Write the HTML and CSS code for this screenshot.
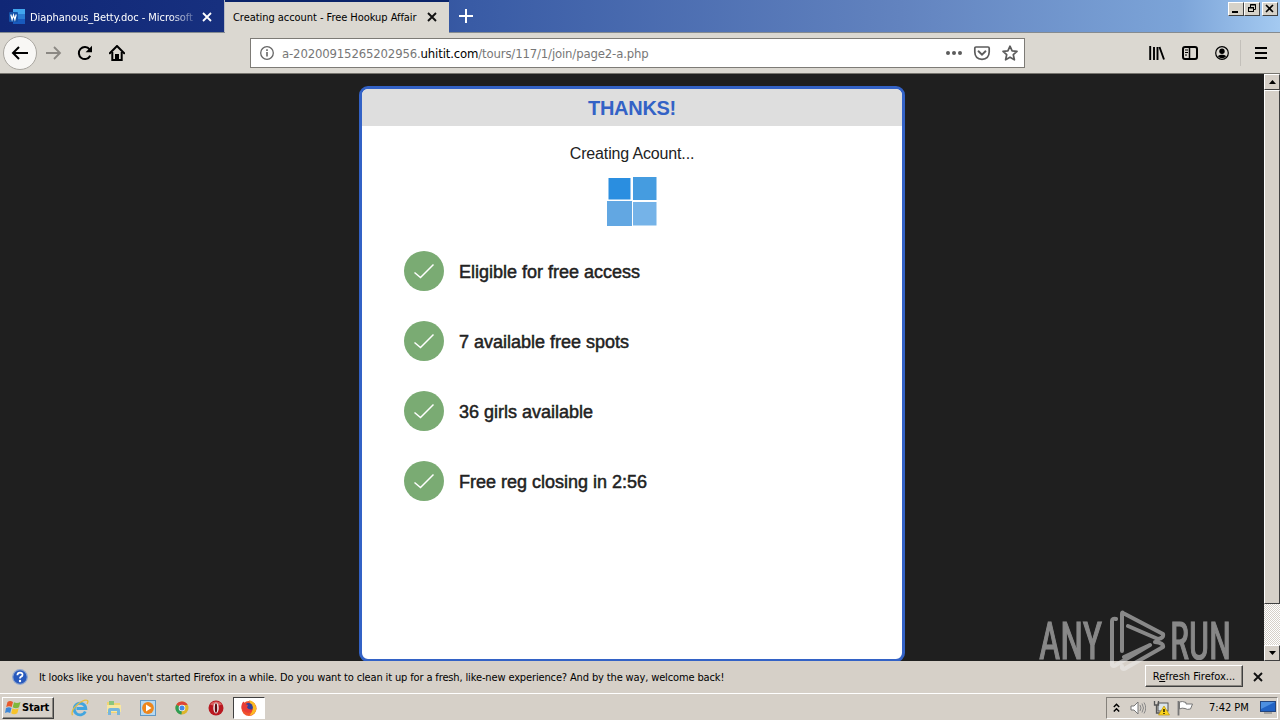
FILE: index.html
```html
<!DOCTYPE html>
<html lang="en">
<head>
    <meta charset="UTF-8">
    <title>Creating account - Free Hookup Affair</title>
    <link rel="stylesheet" href="styles.css">
</head>
<body>

<div class="tabbar">
    <div class="tab">
        <svg class="tab-icon" width="16" height="16" viewBox="0 0 16 16">
            <rect x="4" y="0" width="12" height="15" rx="1" fill="#2b7cd3"/>
            <rect x="4" y="0" width="12" height="5" fill="#41a5ee"/>
            <rect x="4" y="10" width="12" height="5" fill="#185abd"/>
            <rect x="0" y="3" width="9" height="10" rx="1" fill="#1452a8"/>
            <path d="M1.8 5.5L3.1 10.5L4.5 6L5.9 10.5L7.2 5.5" fill="none" stroke="#fff" stroke-width="1.2"/>
        </svg>
        <span class="tab-title fade">Diaphanous_Betty.doc - Microsoft</span>
        <svg class="tab-close" width="10" height="10" viewBox="0 0 10 10"><path d="M1 1L9 9M9 1L1 9" stroke="#fff" stroke-width="1.8"/></svg>
    </div>
    <div class="tab active">
        <span class="tab-title title-active">Creating account - Free Hookup Affair</span>
        <svg class="tab-close" width="10" height="10" viewBox="0 0 10 10"><path d="M1 1L9 9M9 1L1 9" stroke="#111" stroke-width="1.9"/></svg>
    </div>
    <svg class="tab-new" width="14" height="14" viewBox="0 0 14 14"><path d="M7 0V14M0 7H14" stroke="#fff" stroke-width="2"/></svg>
    <div class="win-buttons">
        <div class="win-btn"><svg width="13" height="11"><path d="M3 9H9" stroke="#000" stroke-width="2"/></svg></div>
        <div class="win-btn"><svg width="13" height="11"><path d="M5.5 4V1.5H10.5V6.5H8.5M5 2H11M3 5H9" fill="none" stroke="#000"/><rect x="3.5" y="4.5" width="5" height="4" fill="none" stroke="#000"/></svg></div>
        <div class="win-btn last"><svg width="13" height="11"><path d="M3 2L10 9M10 2L3 9" stroke="#000" stroke-width="1.6"/></svg></div>
    </div>
</div>

<div class="toolbar">
    <div class="back">
        <svg width="18" height="16" viewBox="0 0 18 16"><path d="M17 8H2M8 2L2 8L8 14" fill="none" stroke="#000" stroke-width="2"/></svg>
    </div>
    <svg class="forward" width="17" height="16" viewBox="0 0 17 16"><path d="M1 8H15M9 2L15 8L9 14" fill="none" stroke="#8b8883" stroke-width="1.8"/></svg>
    <svg class="reload" width="16" height="16" viewBox="0 0 16 16"><path d="M13.2 10.8A6 6 0 1 1 12.6 4.4" fill="none" stroke="#000" stroke-width="2"/><path d="M15 0.8V7.2H8.6Z" fill="#000"/></svg>
    <svg class="home" width="16" height="16" viewBox="0 0 16 16"><path d="M0.8 8.2L8 1L15.2 8.2" fill="none" stroke="#000" stroke-width="2" stroke-linecap="round"/><path d="M3.3 7V15H12.7V7" fill="none" stroke="#000" stroke-width="2"/><path d="M6 15V9H10V15Z" fill="#000"/></svg>
    <div class="urlbar">
        <svg width="14" height="14" viewBox="0 0 14 14"><circle cx="7" cy="7" r="6.3" fill="none" stroke="#666" stroke-width="1.3"/><path d="M7 6V10.5M7 3.2V5" stroke="#666" stroke-width="1.6"/></svg>
        <span class="url">a-20200915265202956.<b>uhitit.com</b>/tours/117/1/join/page2-a.php</span>
        <svg class="page-actions" width="72" height="16" viewBox="0 0 72 16">
            <g fill="#5c5c5c"><circle cx="2" cy="8" r="2"/><circle cx="8" cy="8" r="2"/><circle cx="14" cy="8" r="2"/></g>
            <path d="M30 2H42Q43.2 2 43.2 3.2V7Q43 14 36 14.3Q29 14 28.8 7V3.2Q28.8 2 30 2Z" fill="none" stroke="#5c5c5c" stroke-width="1.7"/>
            <path d="M32.5 6.3L36 9.7L39.5 6.3" fill="none" stroke="#5c5c5c" stroke-width="1.9" stroke-linecap="round"/>
            <path d="M64 1.2L66.1 5.9L71 6.4L67.3 9.7L68.4 14.8L64 12.2L59.6 14.8L60.7 9.7L57 6.4L61.9 5.9Z" fill="none" stroke="#5c5c5c" stroke-width="1.7" stroke-linejoin="round"/>
        </svg>
    </div>
    <div class="tools">
        <svg width="16" height="14" viewBox="0 0 16 14"><path d="M1.2 0V14M5 1V14M8.5 1V14M10.5 1L15 13.5" stroke="#000" stroke-width="1.9"/></svg>
        <svg width="16" height="14" viewBox="0 0 16 14"><rect x="1" y="1" width="14" height="12" rx="2" fill="none" stroke="#000" stroke-width="2"/><path d="M7.5 1V13" stroke="#000" stroke-width="1.5"/><path d="M3 4H6M3 6.5H6M3 9H5" stroke="#000"/></svg>
        <svg width="14" height="14" viewBox="0 0 14 14"><circle cx="7" cy="7" r="6.3" fill="none" stroke="#000" stroke-width="1.2"/><circle cx="7" cy="5.3" r="2.7"/><path d="M2.8 10.3Q4 8.3 7 8.7Q10 8.3 11.2 10.3Q9.5 12.2 7 12.2Q4.5 12.2 2.8 10.3Z"/></svg>
    </div>
    <div class="menu">
        <svg width="12" height="12" viewBox="0 0 12 12"><path d="M0 1H12M0 6H12M0 11H12" stroke="#000" stroke-width="2"/></svg>
    </div>
</div>

<div class="viewport">
    <div class="page">
        <div class="card">
            <h1>THANKS!</h1>
            <p class="status">Creating Acount...</p>
            <svg class="loader" width="50" height="50" viewBox="0 0 50 50">
                <rect x="1.5" y="1" width="22" height="21.5" fill="#2a8ee0"/>
                <rect x="26" y="0" width="23.5" height="23" fill="#459ce0"/>
                <rect x="0" y="24" width="25" height="25" fill="#62a7e2"/>
                <rect x="26" y="25" width="23.5" height="23.5" fill="#75b3e8"/>
            </svg>
            <ul class="checks">
                <li><svg class="check" viewBox="0 0 40 40"><circle cx="20" cy="20" r="20" fill="#7aab73"/><path d="M10.5 21.5L16.5 26.5L29.5 13.5" fill="none" stroke="#fff" stroke-width="1.5"/></svg><span>Eligible for free access</span></li>
                <li><svg class="check" viewBox="0 0 40 40"><circle cx="20" cy="20" r="20" fill="#7aab73"/><path d="M10.5 21.5L16.5 26.5L29.5 13.5" fill="none" stroke="#fff" stroke-width="1.5"/></svg><span>7 available free spots</span></li>
                <li><svg class="check" viewBox="0 0 40 40"><circle cx="20" cy="20" r="20" fill="#7aab73"/><path d="M10.5 21.5L16.5 26.5L29.5 13.5" fill="none" stroke="#fff" stroke-width="1.5"/></svg><span>36 girls available</span></li>
                <li><svg class="check" viewBox="0 0 40 40"><circle cx="20" cy="20" r="20" fill="#7aab73"/><path d="M10.5 21.5L16.5 26.5L29.5 13.5" fill="none" stroke="#fff" stroke-width="1.5"/></svg><span>Free reg closing in 2:56</span></li>
            </ul>
        </div>
    </div>
    <div class="scrollbar">
        <div class="scroll-btn"><svg width="7" height="4"><path d="M3.5 0L7 4H0Z"/></svg></div>
        <div class="scroll-thumb"></div>
        <div class="scroll-track"></div>
        <div class="scroll-btn"><svg width="7" height="4"><path d="M0 0H7L3.5 4Z"/></svg></div>
    </div>
</div>

<div class="notice">
    <svg width="16" height="16" viewBox="0 0 16 16"><circle cx="8" cy="8" r="7.3" fill="#2859bd" stroke="#8fa6cf" stroke-width="1.2"/><path d="M5.4 6.2Q5.5 3.7 8 3.7Q10.6 3.7 10.5 5.9Q10.4 7.3 8.8 7.9Q8 8.3 8 9.6" fill="none" stroke="#fff" stroke-width="1.8"/><circle cx="8" cy="12" r="1.2" fill="#fff"/></svg>
    <span class="notice-text">It looks like you haven't started Firefox in a while. Do you want to clean it up for a fresh, like-new experience? And by the way, welcome back!</span>
    <button class="refresh">R<u>e</u>fresh Firefox...</button>
    <svg class="notice-close" width="10" height="10" viewBox="0 0 10 10"><path d="M1 1L9 9M9 1L1 9" stroke="#111" stroke-width="1.9"/></svg>
</div>

<div class="taskbar">
    <button class="start">
        <svg width="16" height="15" viewBox="0 0 16 15">
            <path d="M2.5 2Q5 0 8 2L6.7 7Q4 5.5 1.2 7Z" fill="#e8592b"/>
            <path d="M9 2.3Q12 4 15.5 2L14 7.3Q11 9 7.7 7.3Z" fill="#7fb83c"/>
            <path d="M1 8Q4 6.5 6.5 8L5.2 13Q2.5 11.5 0 13Z" fill="#3d87d8"/>
            <path d="M7.5 8.3Q10.5 10 13.7 8.3L12.3 13.3Q9 15 6.2 13.3Z" fill="#f7c32b"/>
        </svg>
        <span>Start</span>
    </button>
    <div class="launch">
        <svg width="18" height="18" viewBox="0 0 18 18"><path d="M14.3 12.5A5.8 5.8 0 1 1 14.8 9.5H5.5" fill="none" stroke="#42a5df" stroke-width="2.8"/><path d="M1.5 16.3Q-0.5 12 6 6Q13 0 16.5 1.5Q17.5 2.5 16 5" fill="none" stroke="#e6bd3f" stroke-width="1.3"/></svg>
        <svg width="18" height="18" viewBox="0 0 18 18"><path d="M2 3H7L8 4H15V14H2Z" fill="#f1d373"/><path d="M4 2H9V6H4Z" fill="#8bc57d"/><path d="M2 6H16V13H2Z" fill="#f8e7a0"/><path d="M3 16V11Q3 9 5 9H13Q15 9 15 11V16H12V12H6V16Z" fill="#77b6dc"/></svg>
        <svg width="18" height="18" viewBox="0 0 18 18"><rect x="1.5" y="1.5" width="15" height="15" fill="#b6d9f2" stroke="#6198c5"/><circle cx="9" cy="9" r="5.9" fill="#ee861c"/><path d="M7 5.5L12.5 9L7 12.5Z" fill="#fff"/></svg>
        <svg width="18" height="18" viewBox="0 0 18 18"><circle cx="9" cy="9" r="6.5" fill="#ddb52b"/><path d="M9 9L3.3 5.7A6.5 6.5 0 0 1 14.7 6H9Z" fill="#dc4437"/><path d="M9 9L3.3 5.7A6.5 6.5 0 0 0 8.5 15.5Z" fill="#2f9c55"/><circle cx="9" cy="9" r="3.3" fill="#f5f5f5"/><circle cx="9" cy="9" r="2.5" fill="#4388e8"/></svg>
        <svg width="18" height="18" viewBox="0 0 18 18"><circle cx="9" cy="9" r="7.5" fill="#b91820"/><path d="M3 5.5A7.5 7.5 0 0 1 15 5.5Q9 8 3 5.5Z" fill="#d9615f"/><ellipse cx="9" cy="9" rx="2.7" ry="5.4" fill="#eee"/><ellipse cx="9" cy="9" rx="1.2" ry="4.7" fill="#5b0c10"/></svg>
        <div class="running">
            <svg width="18" height="18" viewBox="0 0 18 18"><circle cx="9" cy="9.5" r="7.5" fill="#f0522d"/><path d="M9 1Q16 3 16.5 10Q15 16 9.5 16.5Q14 12 12 7Q10 5 9 1Z" fill="#fbbb23"/><circle cx="8.5" cy="8.3" r="4.3" fill="#34409b"/><path d="M1.5 9Q1 5 3.5 2.5Q4.5 5 8 6L7 8.5Q9 11.5 13 10Q11 14.5 6.5 13.5Q3 12.5 1.5 9Z" fill="#e93c35"/></svg>
        </div>
    </div>
    <div class="tray">
        <svg class="chevrons" width="7" height="10" viewBox="0 0 7 10"><path d="M0.8 4L3.5 1.3L6.2 4M0.8 8.5L3.5 5.8L6.2 8.5" fill="none" stroke="#000" stroke-width="1.5"/></svg>
        <svg width="16" height="14" viewBox="0 0 16 14"><path d="M1 5H4L8 1V13L4 9H1Z" fill="#fff" stroke="#777"/><path d="M10 4Q12 7 10 10M12 2.5Q15 7 12 11.5M14 1.5Q17.5 7 14 12.5" fill="none" stroke="#888"/></svg>
        <svg width="17" height="16" viewBox="0 0 17 16"><rect x="5" y="3" width="10" height="8" fill="#dbe4ea" stroke="#555"/><path d="M1.5 1V5H5.5V1M3.5 5V13H9" fill="none" stroke="#555" stroke-width="1.3"/><path d="M11 6L16.5 15H5.5Z" fill="#fbd31c" stroke="#bd960c" stroke-width=".7"/><path d="M11 9V12M11 13V14" stroke="#000" stroke-width="1.3"/></svg>
        <svg width="17" height="16" viewBox="0 0 17 16"><path d="M1.5 1V15.5" stroke="#777" stroke-width="1.8"/><path d="M2.5 2Q5 0.8 9 2.5V4H15.5L13.5 9Q10 10 8 8.5Q5 7.5 2.5 9Z" fill="#fff" stroke="#777"/></svg>
        <span class="clock">7:42 PM</span>
        <svg class="desktop" width="16" height="13" viewBox="0 0 16 13"><rect x=".5" y=".5" width="15" height="10" fill="#2263c4" stroke="#24457d"/><path d="M1 1H15L1 8Z" fill="#4d8fe0"/><path d="M4 12H12" stroke="#777"/></svg>
    </div>
</div>

<svg class="watermark" width="210" height="70" viewBox="0 0 210 70">
    <text x="3" y="51" font-size="51" textLength="63" lengthAdjust="spacingAndGlyphs">ANY</text>
    <text x="134" y="51" font-size="51" textLength="61" lengthAdjust="spacingAndGlyphs">RUN</text>
    <path class="logo" d="M92 18L122 31Q128 30 127 26L87 5Q86 4 86 6V43M80 11Q76 10 76 13V57Q77 59 80 57L114 37L88 49M119 34Q128 35 127 39L90 60Q87 62 86 60V58"/>
</svg>

</body>
</html>
```
FILE: styles.css
```css
* {
    box-sizing: border-box;
}
body {
    margin: 0;
    width: 1280px;
    height: 720px;
    overflow: hidden;
    position: relative;
    display: flex;
    flex-direction: column;
    background-color: #d6d0c8;
    font-family: "DejaVu Sans Condensed", "DejaVu Sans", sans-serif;
    font-stretch: condensed;
    font-size: 11px;
    color: #000;
}
svg {
    display: block;
    flex-shrink: 0;
}
span {
    white-space: nowrap;
}

/* tabs */
.tabbar {
    height: 33px;
    display: flex;
    background: linear-gradient(to right, #102776 0, #17307f 220px, #395ba5 470px, #6283bf 900px, #7ca4d8 1180px, #a4caf1 1280px);
    border-bottom: 1px solid #858b90;
}
.tab {
    width: 225px;
    display: flex;
    align-items: center;
    padding: 2px 0 0 9px;
    color: #fff;
    border-right: 1px solid #b7bac3;
}
.tab-icon {
    margin-right: 5px;
}
.tab-title {
    width: 164px;
    overflow: hidden;
    letter-spacing: -0.05px;
}
.fade {
    -webkit-mask-image: linear-gradient(to right, #000 140px, transparent 172px);
    mask-image: linear-gradient(to right, #000 140px, transparent 172px);
}
.tab-close {
    margin-left: 8px;
}
.active {
    width: 224px;
    height: 33px;
    padding: 0 0 1px 8px;
    border: none;
    border-top: 2px solid #0a246a;
    background-color: #dbd8d1;
    color: #000;
}
.title-active {
    width: 186px;
}
.tab-new {
    margin: 9px 0 0 10px;
}
.win-buttons {
    margin: 2px 2px 0 auto;
    display: flex;
}
.win-btn {
    width: 16px;
    height: 14px;
    background-color: #d6d2c9;
    border: 1px solid #fff;
    border-right-color: #404040;
    border-bottom-color: #404040;
}
.last {
    margin-left: 2px;
}

/* toolbar */
.toolbar {
    height: 41px;
    display: flex;
    align-items: center;
    padding-left: 3px;
    background-color: #dbd8d1;
    border-bottom: 1px solid #77756f;
}
.back {
    width: 34px;
    height: 34px;
    display: flex;
    align-items: center;
    justify-content: center;
    border: 1px solid #a9a6a0;
    border-radius: 50%;
    background-color: #f8f7f5;
}
.forward {
    margin-left: 8px;
}
.reload {
    margin-left: 15px;
}
.home {
    margin-left: 16px;
}
.urlbar {
    width: 775px;
    height: 30px;
    margin-left: 125px;
    padding: 0 6px 0 9px;
    display: flex;
    align-items: center;
    background-color: #fff;
    border: 1px solid #7d7b76;
}
.url {
    margin-left: 8px;
    font-size: 13px;
    color: #777;
    letter-spacing: -0.15px;
}
.url b {
    font-weight: normal;
    color: #000;
}
.page-actions {
    margin-left: auto;
}
.tools {
    margin-left: 124px;
    display: flex;
    gap: 17px;
}
.menu {
    margin-left: 11px;
    padding: 7px 0 7px 14px;
    border-left: 1px solid #c3c0ba;
}

/* page */
.viewport {
    height: 587px;
    display: flex;
    overflow: hidden;
}
.page {
    width: 1264px;
    padding-top: 12px;
    background-color: #1f1f1f;
    font-family: "Liberation Sans", Arial, sans-serif;
}
.card {
    width: 546px;
    height: 576px;
    margin: 0 auto;
    border: 3px solid #3362c6;
    border-radius: 9px;
    background-color: #fff;
    overflow: hidden;
}
.card h1 {
    margin: 0;
    height: 37px;
    line-height: 39px;
    background-color: #dedede;
    color: #3362c6;
    font-size: 20px;
    letter-spacing: -0.3px;
    text-align: center;
}
.status {
    margin: 18px 0 0;
    font-size: 16px;
    line-height: 20px;
    letter-spacing: -0.15px;
    text-align: center;
    color: #222;
}
.loader {
    margin: 13px auto 0;
}
.checks {
    margin: 24px 0 0;
    padding: 0 0 0 42px;
    list-style: none;
}
.checks li {
    height: 40px;
    margin-bottom: 30px;
    display: flex;
    align-items: center;
    gap: 15px;
    font-size: 18px;
    color: #222;
    -webkit-text-stroke: 0.5px #222;
}
.checks span {
    padding-top: 2px;
}
.check {
    width: 40px;
    height: 40px;
}

/* scrollbar */
.scrollbar {
    width: 16px;
    display: flex;
    flex-direction: column;
    background-color: #ebe8e3;
}
.scroll-btn,
.scroll-thumb {
    border: 1px solid #fff;
    border-right-color: #404040;
    border-bottom-color: #404040;
    background-color: #d6d0c8;
}
.scroll-btn {
    height: 16px;
    display: flex;
    align-items: center;
    justify-content: center;
}
.scroll-thumb {
    height: 514px;
}
.scroll-track {
    flex: 1;
    background: repeating-conic-gradient(#fff 0 25%, #d6d0c8 0 50%) 0 0 / 2px 2px;
}

/* notification */
.notice {
    height: 32px;
    padding-left: 12px;
    display: flex;
    align-items: center;
}
.notice-text {
    margin-left: 11px;
    letter-spacing: -0.137px;
}
button {
    padding: 0;
    font: inherit;
    color: #000;
    background-color: #d6d0c8;
    border: 1px solid #fff;
    border-right-color: #404040;
    border-bottom-color: #404040;
    box-shadow: inset -1px -1px #8b8781;
}
.refresh {
    width: 98px;
    height: 22px;
    margin: 0 10px 2px auto;
}
.notice-close {
    margin-right: 17px;
}

/* taskbar */
.taskbar {
    height: 27px;
    display: flex;
    align-items: center;
    padding: 1px 2px 0;
    border-top: 1px solid #fff;
}
.start {
    width: 52px;
    height: 22px;
    display: flex;
    align-items: center;
    gap: 1px;
    padding-left: 2px;
    font-weight: bold;
    letter-spacing: -0.2px;
}
.launch {
    margin-left: 17px;
    display: flex;
    align-items: center;
    gap: 16px;
}
.running {
    width: 32px;
    height: 22px;
    margin-left: -8px;
    padding: 1px 6px;
    background-color: #fff;
    border: 1px solid #404040;
    border-right-color: #fff;
    border-bottom-color: #fff;
}
.tray {
    width: 172px;
    height: 22px;
    margin-left: auto;
    padding: 0 1px 0 6px;
    display: flex;
    align-items: center;
    border: 1px solid #85817b;
    border-right-color: #fff;
    border-bottom-color: #fff;
}
.tray svg {
    margin-right: 7px;
}
.tray .chevrons {
    margin-right: 10px;
}
.clock {
    margin-left: 8px;
}
.tray .desktop {
    margin: 0 0 0 auto;
}

/* watermark over the page corner */
.watermark {
    position: absolute;
    left: 1036px;
    top: 608px;
    opacity: 0.5;
    fill: #f0f0f0;
    stroke: #f0f0f0;
    stroke-width: 1.2px;
    font-family: Roboto, sans-serif;
}
.logo {
    fill: none;
    stroke-width: 4px;
    stroke-linecap: round;
    stroke-linejoin: round;
}
```
